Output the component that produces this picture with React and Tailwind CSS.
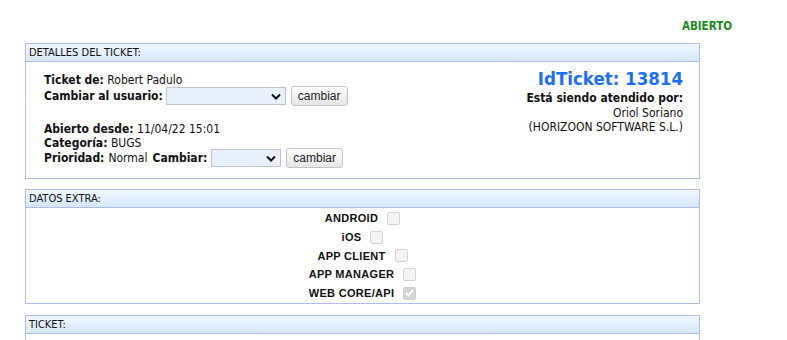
const tahoma = { fontFamily: '"DejaVu Sans Condensed", "DejaVu Sans", sans-serif' };

function Panel({ title, children, className = "" }) {
    return (
        <div className={`mx-[25px] w-[675px] border border-[#aebcf0] bg-white ${className}`}>
            <div className="h-[18px] border-b border-[#aebcf0] bg-gradient-to-b from-[#f1f7ff] to-[#d6e6fd] pl-[3px] text-[11px] leading-[18px] text-[#111]">
                {title}
            </div>
            {children}
        </div>
    );
}

function FakeSelect({ width }) {
    return (
        <div
            className="flex h-[18px] items-center justify-end border border-[#bfc4cc] bg-[#e8f0fe] pr-[4px]"
            style={{ width }}
        >
            <svg width="10" height="7" viewBox="0 0 10 7">
                <path d="M1 1.5 L5 5.5 L9 1.5" fill="none" stroke="#111" strokeWidth="2" />
            </svg>
        </div>
    );
}

function Button() {
    return (
        <div className="ml-[5px] flex h-[20px] items-center rounded-[3px] border border-[#c4c4c4] bg-gradient-to-b from-[#fdfdfd] to-[#e6e6e6] px-[6px] font-['Liberation_Sans',Arial,sans-serif] text-[12px] text-[#222]">
            cambiar
        </div>
    );
}

function CheckRow({ label, checked }) {
    return (
        <div className="flex h-[18.75px] items-center justify-center">
            <span className="font-['Liberation_Sans',Arial,sans-serif] text-[11px] font-bold tracking-[0.3px] text-[#111]">
                {label}
            </span>
            <span
                className={`ml-[9px] flex h-[13px] w-[13px] items-center justify-center rounded-[2px] border ${
                    checked ? "border-[#cdcdcd] bg-[#d4d4d4]" : "border-[#d2d2d2] bg-[#f4f4f4]"
                }`}
            >
                {checked && (
                    <svg width="9" height="8" viewBox="0 0 9 8">
                        <path d="M1 4 L3.5 6.5 L8 1" fill="none" stroke="#fff" strokeWidth="1.8" />
                    </svg>
                )}
            </span>
        </div>
    );
}

export default function App() {
    const extras = [
        { label: "ANDROID" },
        { label: "iOS" },
        { label: "APP CLIENT" },
        { label: "APP MANAGER" },
        { label: "WEB CORE/API", checked: true },
    ];

    return (
        <div className="h-[340px] w-[787px] overflow-hidden bg-white text-[12px] text-[#111]" style={tahoma}>
            {/* estado */}
            <div className="flex h-[43px] justify-end pr-[55px] pt-[19px]">
                <span className="text-[11.5px] font-bold leading-[14px] text-[#1c8a1c]">ABIERTO</span>
            </div>

            <Panel title="DETALLES DEL TICKET:">
                <div className="flex justify-between pb-[10px] pl-[18px] pr-[16px] pt-[10px]">
                    <div className="leading-[14px]">
                        <div className="mt-[1px]">
                            <b>Ticket de:</b> Robert Padulo
                        </div>
                        <div className="-mt-[1px] flex items-center">
                            <b className="mr-[3px]">Cambiar al usuario:</b>
                            <FakeSelect width={120} />
                            <Button />
                        </div>
                        <div className="mt-[16px]">
                            <b>Abierto desde:</b> 11/04/22 15:01
                        </div>
                        <div>
                            <b>Categoría:</b> BUGS
                        </div>
                        <div className="-mt-[2px] flex items-center">
                            <b className="mr-[4px]">Prioridad:</b>
                            <span>Normal</span>
                            <b className="ml-[5px] mr-[4px]">Cambiar:</b>
                            <FakeSelect width={70} />
                            <Button />
                        </div>
                    </div>
                    <div className="-mt-[4px] text-right leading-[14.5px]">
                        <div className="mb-[1px] text-[18.5px] font-bold leading-[22px] text-[#1a6ff2]">IdTicket: 13814</div>
                        <div className="font-bold">Está siendo atendido por:</div>
                        <div>Oriol Soriano</div>
                        <div>(HORIZOON SOFTWARE S.L.)</div>
                    </div>
                </div>
            </Panel>

            <Panel title="DATOS EXTRA:" className="mt-[10px]">
                <div className="pt-[1px]">
                    {extras.map((e) => (
                        <CheckRow key={e.label} label={e.label} checked={e.checked} />
                    ))}
                </div>
            </Panel>

            <Panel title="TICKET:" className="mt-[11px]">
                <div className="h-[40px]" />
            </Panel>
        </div>
    );
}
